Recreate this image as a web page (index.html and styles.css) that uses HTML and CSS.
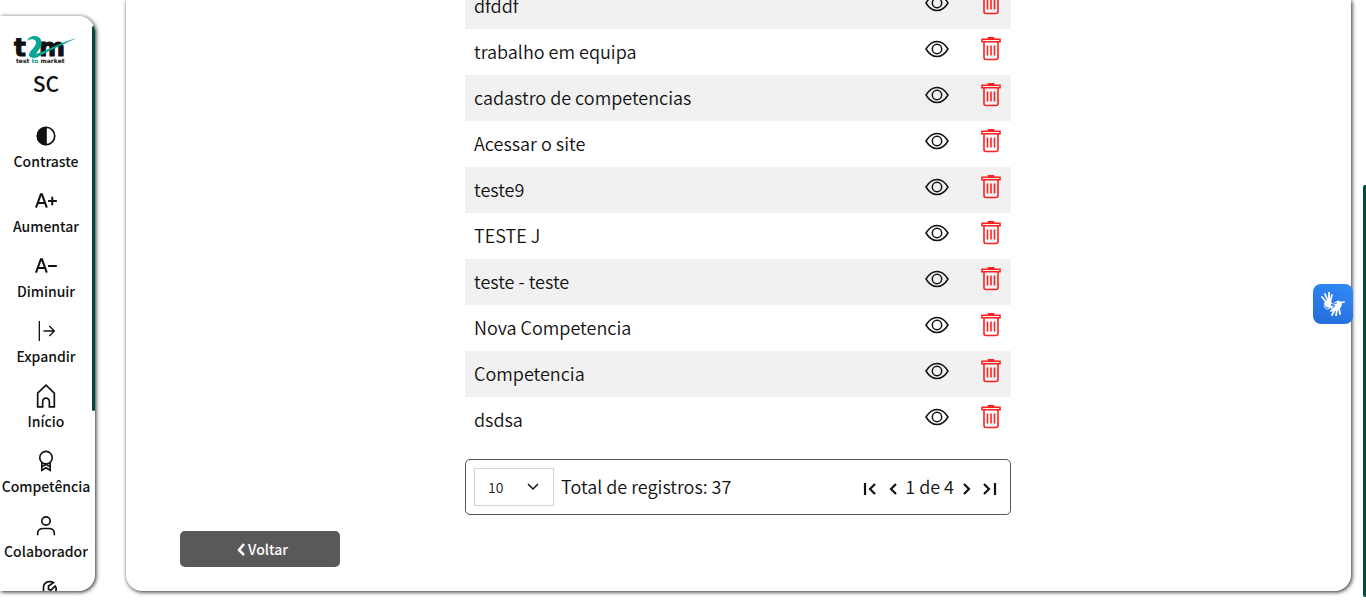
FILE: index.html
```
<!DOCTYPE html>
<html lang="pt-BR">
<head>
<meta charset="utf-8">
<meta name="viewport" content="width=device-width, initial-scale=1">
<title>Competências</title>
<link rel="stylesheet" href="styles.css">
</head>
<body>
<svg class="sprite" aria-hidden="true">
  <symbol id="eye" viewBox="0 0 24 18"><path d="M1 9C4 4 7.500 1.500 12 1.500S20 4 23 9c-3 5-6.500 7.500-11 7.500S4 14 1 9Z"/><circle cx="12" cy="9" r="4.700"/></symbol>
  <symbol id="trash" viewBox="0 0 20 24"><path d="M7.500 1.500v-.7h5v.7M1 2.200h18v2.600H1ZM3 5v15.500a2 2 0 0 0 2 2h10a2 2 0 0 0 2-2V5M6.500 8.500v10M10 8.500v10M13.500 8.500v10"/></symbol>
</svg>
<div class="layout">
  <aside class="sidebar">
    <svg class="logo" viewBox="0 0 64 30" role="img" aria-label="t2m test to market">
      <text class="logo-name" x="0" y="20">t</text>
      <text class="logo-name" x="25" y="20">m</text>
      <path class="logo-mark" d="M13 5C15-1 25-2 27 4c2 6-2 9-5 14C34 14 47 6 63 2 48 9 34 15 24 21c-3 2-9 1-9-2 0-4 6-7 7-12 1-4-6-5-9-2Z"/>
      <text class="logo-tag" x="2" y="27">test <tspan class="logo-to">to</tspan> market</text>
    </svg>
    <div class="initials">SC</div>
    <nav class="menu">
      <button class="item" type="button"><svg viewBox="0 0 24 24"><circle cx="12" cy="12" r="10.500"/><path class="fill" d="M13 1v22H12a11 11 0 0 1 0-22Z"/></svg>Contraste</button>
      <button class="item" type="button"><svg viewBox="0 0 24 24"><path class="bold" d="M0 20 5.800 4h1.400L13 20M2.500 14.500h8M14.500 12H25M19.500 7v10"/></svg>Aumentar</button>
      <button class="item" type="button"><svg viewBox="0 0 24 24"><path class="bold" d="M0 20 5.800 4h1.400L13 20M2.500 14.500h8M14.500 12H25"/></svg>Diminuir</button>
      <button class="item" type="button"><svg viewBox="0 0 24 24"><path class="thin" d="M4 0v24M9 12h13M16 6l6 6-6 6"/></svg>Expandir</button>
      <a class="item" href="#"><svg viewBox="0 0 24 24"><path d="M2 25V8.500L12-1l10 9.500V25h-6v-6.500a4 4 0 0 0-8 0V25Z"/></svg>Início</a>
      <a class="item" href="#"><svg viewBox="0 0 24 24"><circle cx="12" cy="8" r="7.500"/><path d="M7 14v9l5-3 5 3v-9M7 18h2l3-2 3 2h2"/></svg>Competência</a>
      <a class="item" href="#"><svg viewBox="0 0 24 24"><circle cx="12" cy="6" r="5"/><path d="M2 23v-2c0-4 3-6 7-6h6c4 0 7 2 7 6v2"/></svg>Colaborador</a>
      <a class="item" href="#"><svg viewBox="0 0 24 24"><path d="M9 14V7c0-4 4-7 10-6l2 1-6 4v4l3 1 5-5c3 4 0 9-4 10l-3 0-9 8-4-4Z"/></svg>Ferramentas</a>
    </nav>
    <div class="sidebar-thumb"></div>
  </aside>
  <main class="panel">
    <div class="list">
      <table class="records">
        <tbody>
          <tr><td>dfddf</td><td class="action"><button type="button" aria-label="Ver"><svg class="eye"><use href="#eye"/></svg></button></td><td class="action"><button type="button" aria-label="Excluir"><svg class="trash"><use href="#trash"/></svg></button></td></tr>
          <tr><td>trabalho em equipa</td><td class="action"><button type="button" aria-label="Ver"><svg class="eye"><use href="#eye"/></svg></button></td><td class="action"><button type="button" aria-label="Excluir"><svg class="trash"><use href="#trash"/></svg></button></td></tr>
          <tr><td>cadastro de competencias</td><td class="action"><button type="button" aria-label="Ver"><svg class="eye"><use href="#eye"/></svg></button></td><td class="action"><button type="button" aria-label="Excluir"><svg class="trash"><use href="#trash"/></svg></button></td></tr>
          <tr><td>Acessar o site</td><td class="action"><button type="button" aria-label="Ver"><svg class="eye"><use href="#eye"/></svg></button></td><td class="action"><button type="button" aria-label="Excluir"><svg class="trash"><use href="#trash"/></svg></button></td></tr>
          <tr><td>teste9</td><td class="action"><button type="button" aria-label="Ver"><svg class="eye"><use href="#eye"/></svg></button></td><td class="action"><button type="button" aria-label="Excluir"><svg class="trash"><use href="#trash"/></svg></button></td></tr>
          <tr><td>TESTE J</td><td class="action"><button type="button" aria-label="Ver"><svg class="eye"><use href="#eye"/></svg></button></td><td class="action"><button type="button" aria-label="Excluir"><svg class="trash"><use href="#trash"/></svg></button></td></tr>
          <tr><td>teste - teste</td><td class="action"><button type="button" aria-label="Ver"><svg class="eye"><use href="#eye"/></svg></button></td><td class="action"><button type="button" aria-label="Excluir"><svg class="trash"><use href="#trash"/></svg></button></td></tr>
          <tr><td>Nova Competencia</td><td class="action"><button type="button" aria-label="Ver"><svg class="eye"><use href="#eye"/></svg></button></td><td class="action"><button type="button" aria-label="Excluir"><svg class="trash"><use href="#trash"/></svg></button></td></tr>
          <tr><td>Competencia</td><td class="action"><button type="button" aria-label="Ver"><svg class="eye"><use href="#eye"/></svg></button></td><td class="action"><button type="button" aria-label="Excluir"><svg class="trash"><use href="#trash"/></svg></button></td></tr>
          <tr><td>dsdsa</td><td class="action"><button type="button" aria-label="Ver"><svg class="eye"><use href="#eye"/></svg></button></td><td class="action"><button type="button" aria-label="Excluir"><svg class="trash"><use href="#trash"/></svg></button></td></tr>
        </tbody>
      </table>
      <div class="pager">
        <div class="select-wrap">
          <select aria-label="Registros por página"><option>10</option><option>20</option></select>
          <svg class="caret" viewBox="0 0 12 8"><path d="m1 1 5 5 5-5"/></svg>
        </div>
        <span class="total">Total de registros: 37</span>
        <div class="pages">
          <button type="button" aria-label="Primeira página"><svg viewBox="0 0 14 12"><path d="M3 0v12M13 1 8 6l5 5"/></svg></button>
          <button type="button" aria-label="Página anterior"><svg viewBox="0 0 14 12"><path d="M10 1 5 6l5 5"/></svg></button>
          <span>1 de 4</span>
          <button type="button" aria-label="Próxima página"><svg viewBox="0 0 14 12"><path d="m5 1 5 5-5 5"/></svg></button>
          <button type="button" aria-label="Última página"><svg viewBox="0 0 14 12"><path d="m1 1 5 5-5 5M12 0v12"/></svg></button>
        </div>
      </div>
    </div>
    <button class="back" type="button"><svg viewBox="0 0 10 14"><path d="M8 2 3 8l5 5"/></svg>Voltar</button>
  </main>
</div>
<button class="libras" type="button" aria-label="Acessível em Libras">
  <svg viewBox="0 0 24 24"><path class="hand" d="M6 11 1 5M7 9 4 2M8 9V0M9 10l2-7M13 17l-3 2M14 17l-3 6M16 17l-1 7M18 16l1 6M19 11l4-1"/><path class="palm" d="m4 9 6-1 1 4 5-3c5-1 6 3 4 6l-2 3-6 1-2-3-5-1-2-3Z"/><path class="hand thin-hand" d="M3 14c1 3 3 4 6 2"/><path class="gap" d="m16 11-6 2 4 1-3 2"/></svg>
</button>
<div class="page-thumb"></div>
</body>
</html>
```
FILE: styles.css
```
* { box-sizing: border-box; }
body {
  margin: 0;
  overflow: hidden;
  background: #fff;
  color: #111;
  font-family: "Noto Sans CJK SC", "Noto Sans", sans-serif;
}
button { padding: 0; border: 0; background: none; color: inherit; font: inherit; cursor: pointer; }
svg { fill: none; stroke: currentColor; }
.sprite { position: absolute; width: 0; height: 0; }

.layout { display: flex; gap: 31px; height: 100vh; padding: 0 15px 16px 0; }

.sidebar {
  position: relative;
  display: flex;
  flex: 0 0 95px;
  flex-direction: column;
  align-items: center;
  margin-top: 16px;
  padding: 20px 3px 0 0;
  overflow: hidden;
  border-radius: 0 16px 16px 0;
  box-shadow: 1px 1px 4px #222;
}
.logo { flex: none; width: 64px; height: 30px; overflow: visible; stroke: none; }
.logo-name { fill: #111; stroke: #111; stroke-width: 1; font: bold 25px "DejaVu Sans", sans-serif; }
.logo-tag { fill: #111; font: bold 6px "DejaVu Sans", sans-serif; }
.logo-mark, .logo-to { fill: #0aa695; }
.initials { font-size: 21px; font-weight: 500; line-height: 34px; }
.menu { display: flex; flex-direction: column; align-items: center; gap: 17px; margin-top: 26px; }
.item {
  display: flex;
  flex: none;
  flex-direction: column;
  align-items: center;
  gap: 3px;
  height: 48px;
  color: #111;
  font-size: 14px;
  font-weight: 500;
  line-height: 24px;
  text-decoration: none;
  white-space: nowrap;
}
button.item { justify-content: flex-start; }
.item svg { flex: none; width: 24px; height: 20px; stroke-width: 2; overflow: visible; }
.item .fill { fill: currentColor; stroke: none; }
.item .bold { stroke-width: 2.4; }
.item .thin { stroke-width: 1.6; }
.sidebar-thumb { position: absolute; top: 10px; right: 0; width: 3px; height: 385px; border-radius: 2px; background: #00493c; }

.panel {
  display: flex;
  flex: 1;
  flex-direction: column;
  justify-content: flex-end;
  min-width: 0;
  padding: 0 55px 24px 54px;
  overflow: hidden;
  border-radius: 0 0 16px 16px;
  box-shadow: 1px 1px 4px #222;
}
.list { display: flex; flex-direction: column; gap: 16px; width: 100%; max-width: 546px; margin: 0 auto 16px; font-size: 18px; font-weight: 350; }
.records { width: 100%; border-collapse: collapse; }
.records tr:nth-child(odd) { background: #f1f1f1; }
.records td { height: 46px; padding: 0 9px 2px; line-height: 28px; }
.records .action { width: 54px; padding: 0 0 12px 14px; text-align: center; }
.action button { display: inline-flex; vertical-align: middle; }
.eye { width: 24px; height: 18px; stroke-width: 1.5; }
.trash { width: 20px; height: 24px; color: #ff2020; stroke-width: 1.6; }

.pager { display: flex; align-items: center; height: 56px; padding: 0 8px; border: 1px solid #555; border-radius: 5px; }
.select-wrap { position: relative; width: 80px; }
.select-wrap select {
  width: 100%;
  height: 38px;
  padding: 0 13px;
  border: 1px solid #ced4da;
  border-radius: 0;
  appearance: none;
  background: #fff;
  color: #222;
  font: 350 14px "Noto Sans CJK SC", sans-serif;
}
.caret { position: absolute; top: 15px; right: 15px; width: 12px; height: 8px; stroke-width: 1.5; pointer-events: none; }
.total { margin-left: 7px; padding-bottom: 2px; }
.pages { display: flex; align-items: center; margin-left: auto; }
.pages span { padding-bottom: 2px; }
.pages button { display: flex; justify-content: center; width: 24px; padding-top: 3px; }
.pages svg { width: 14px; height: 12px; stroke-width: 2.2; }

.back {
  display: flex;
  flex: none;
  align-items: center;
  justify-content: center;
  gap: 2px;
  width: 160px;
  height: 36px;
  padding-left: 4px;
  border-radius: 5px;
  background: #595959;
  color: #fff;
  font-size: 14px;
  font-weight: 500;
}
.back svg { width: 10px; height: 14px; stroke-width: 2.5; }

.libras {
  position: fixed;
  top: 284px;
  right: 13px;
  display: grid;
  place-items: center;
  width: 40px;
  height: 40px;
  border-radius: 8px;
  background: linear-gradient(20deg, #246bd9, #318bf7);
  color: #fff;
}
.libras svg { width: 24px; height: 24px; }
.hand { stroke-width: 1.8; stroke-linecap: round; }
.thin-hand { stroke-width: 1; }
.palm { fill: #fff; stroke: none; }
.gap { stroke: #2c7be8; stroke-width: 1; }
.page-thumb { position: fixed; top: 185px; right: 0; bottom: 10px; width: 3px; border-radius: 2px 0 0 2px; background: #00493c; }
```
